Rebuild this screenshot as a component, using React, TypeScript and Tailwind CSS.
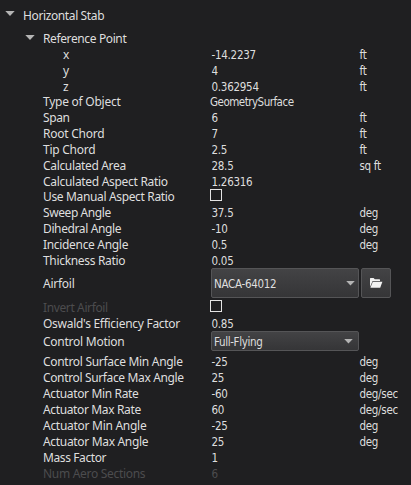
import React from 'react';

const LABEL = "font-['Noto_Sans','Open_Sans',sans-serif] text-[12px] leading-[16px] whitespace-nowrap";
const VALUE = "font-['DejaVu_Sans_Condensed','DejaVu_Sans',sans-serif] [font-stretch:condensed] text-[11.5px] leading-[16px] whitespace-nowrap";

function Triangle({ className = '' }: { className?: string }) {
  return (
    <svg className={className} width="10" height="5" viewBox="0 0 10 5" preserveAspectRatio="none">
      <path d="M0.3 0H9.7L5 5Z" fill="#b4b4b4" />
    </svg>
  );
}

type RowProps = {
  label: string;
  value?: string;
  unit?: string;
  height?: string;
  indent?: string;
  track?: string;
  disabled?: boolean;
  children?: React.ReactNode;
};

function Row({
  label,
  value,
  unit,
  height = 'h-4',
  indent = 'pl-[43px]',
  track = 'tracking-[-0.25px]',
  disabled,
  children,
}: RowProps) {
  return (
    <div className={`flex ${height} ${disabled ? 'text-[#4c4c4e]' : 'text-[#dedede]'}`}>
      <div className={`w-[210px] shrink-0 ${indent} ${LABEL} ${track}`}>{label}</div>
      {children ?? (
        <>
          <div className={`w-[149.5px] shrink-0 pl-[1.5px] tracking-[-0.27px] ${VALUE}`}>{value}</div>
          <div className={`tracking-[-0.3px] ${VALUE}`}>{unit}</div>
        </>
      )}
    </div>
  );
}

function Checkbox() {
  return <div className="h-3 w-3 border border-[#e4e4e4]" />;
}

const BOX = 'rounded-[2px] border border-[#555557] bg-linear-to-b from-[#434345] to-[#353537]';

export default function App() {
  return (
    <div className="h-[485px] w-[411px] overflow-hidden bg-[#1f1f21] pt-2">
      <div className="flex h-[23px] text-[#dedede]">
        <Triangle className="mt-[3px] ml-[5px]" />
        <span className={`ml-2 ${LABEL} tracking-[-0.38px]`}>Horizontal Stab</span>
      </div>
      <div className="flex h-4 text-[#dedede]">
        <Triangle className="mt-[4px] ml-[25px]" />
        <span className={`ml-2 ${LABEL} tracking-[-0.38px]`}>Reference Point</span>
      </div>
      <Row label="x" value="-14.2237" unit="ft" indent="pl-[63px]" />
      <Row label="y" value="4" unit="ft" indent="pl-[63px]" />
      <Row label="z" value="0.362954" unit="ft" indent="pl-[63px]" height="h-[15px]" />
      <Row label="Type of Object">
        <div className={`tracking-[-0.5px] ${VALUE}`}>GeometrySurface</div>
      </Row>
      <Row label="Span" value="6" unit="ft" track="tracking-[-0.4px]" />
      <Row label="Root Chord" value="7" unit="ft" />
      <Row label="Tip Chord" value="2.5" unit="ft" />
      <Row label="Calculated Area" value="28.5" unit="sq ft" track="tracking-[-0.34px]" />
      <Row label="Calculated Aspect Ratio" value="1.26316" height="h-[15px]" track="tracking-[-0.3px]" />
      <Row label="Use Manual Aspect Ratio" track="tracking-[-0.35px]">
        <Checkbox />
      </Row>
      <Row label="Sweep Angle" value="37.5" unit="deg" track="tracking-[-0.42px]" />
      <Row label="Dihedral Angle" value="-10" unit="deg" track="tracking-[-0.38px]" />
      <Row label="Incidence Angle" value="0.5" unit="deg" track="tracking-[-0.32px]" />
      <Row label="Thickness Ratio" value="0.05" height="h-[15px]" track="tracking-[-0.32px]" />
      <div className="flex h-8 text-[#dedede]">
        <div className={`w-[211px] shrink-0 pt-2 pl-[43px] ${LABEL} tracking-[-0.25px]`}>Airfoil</div>
        <div className={`flex h-[30px] w-[148px] justify-between pt-[7px] pr-[3px] pl-[2px] ${BOX}`}>
          <span className={`tracking-[-0.3px] ${VALUE}`}>NACA-64012</span>
          <Triangle className="mt-[5px] h-[4.5px] w-[9px]" />
        </div>
        <div className={`ml-[2px] flex h-[30px] w-[30px] items-center justify-center ${BOX}`}>
          <svg width="14" height="12" viewBox="0 0 14 12">
            <path d="M1 10V1.6Q1 1 1.6 1H4.6L5.8 2.2H10.4Q11 2.2 11 2.8V4H3.6Z" fill="#f2f2f2" />
            <path d="M3.8 4.8H13.4L11.2 10.8H1.4Z" fill="#f2f2f2" />
          </svg>
        </div>
      </div>
      <Row label="Invert Airfoil" track="tracking-[-0.38px]" disabled>
        <Checkbox />
      </Row>
      <Row label="Oswald's Efficiency Factor" value="0.85" height="h-[15px]" track="tracking-[-0.28px]" />
      <div className="flex h-[23px] text-[#dedede]">
        <div className={`w-[211px] shrink-0 pt-[3px] pl-[43px] ${LABEL} tracking-[-0.25px]`}>Control Motion</div>
        <div className={`flex h-[20px] w-[148px] justify-between pt-[2px] pr-[5px] pl-[2px] ${BOX}`}>
          <span className={`tracking-[-0.35px] ${VALUE}`}>Full-Flying</span>
          <Triangle className="mt-[5px] h-[4.5px] w-[9px]" />
        </div>
      </div>
      <Row label="Control Surface Min Angle" value="-25" unit="deg" track="tracking-[-0.3px]" />
      <Row label="Control Surface Max Angle" value="25" unit="deg" track="tracking-[-0.36px]" />
      <Row label="Actuator Min Rate" value="-60" unit="deg/sec" track="tracking-[-0.35px]" />
      <Row label="Actuator Max Rate" value="60" unit="deg/sec" track="tracking-[-0.36px]" />
      <Row label="Actuator Min Angle" value="-25" unit="deg" track="tracking-[-0.28px]" />
      <Row label="Actuator Max Angle" value="25" unit="deg" track="tracking-[-0.32px]" />
      <Row label="Mass Factor" value="1" track="tracking-[-0.4px]" />
      <Row label="Num Aero Sections" value="6" track="tracking-[-0.3px]" disabled />
    </div>
  );
}
